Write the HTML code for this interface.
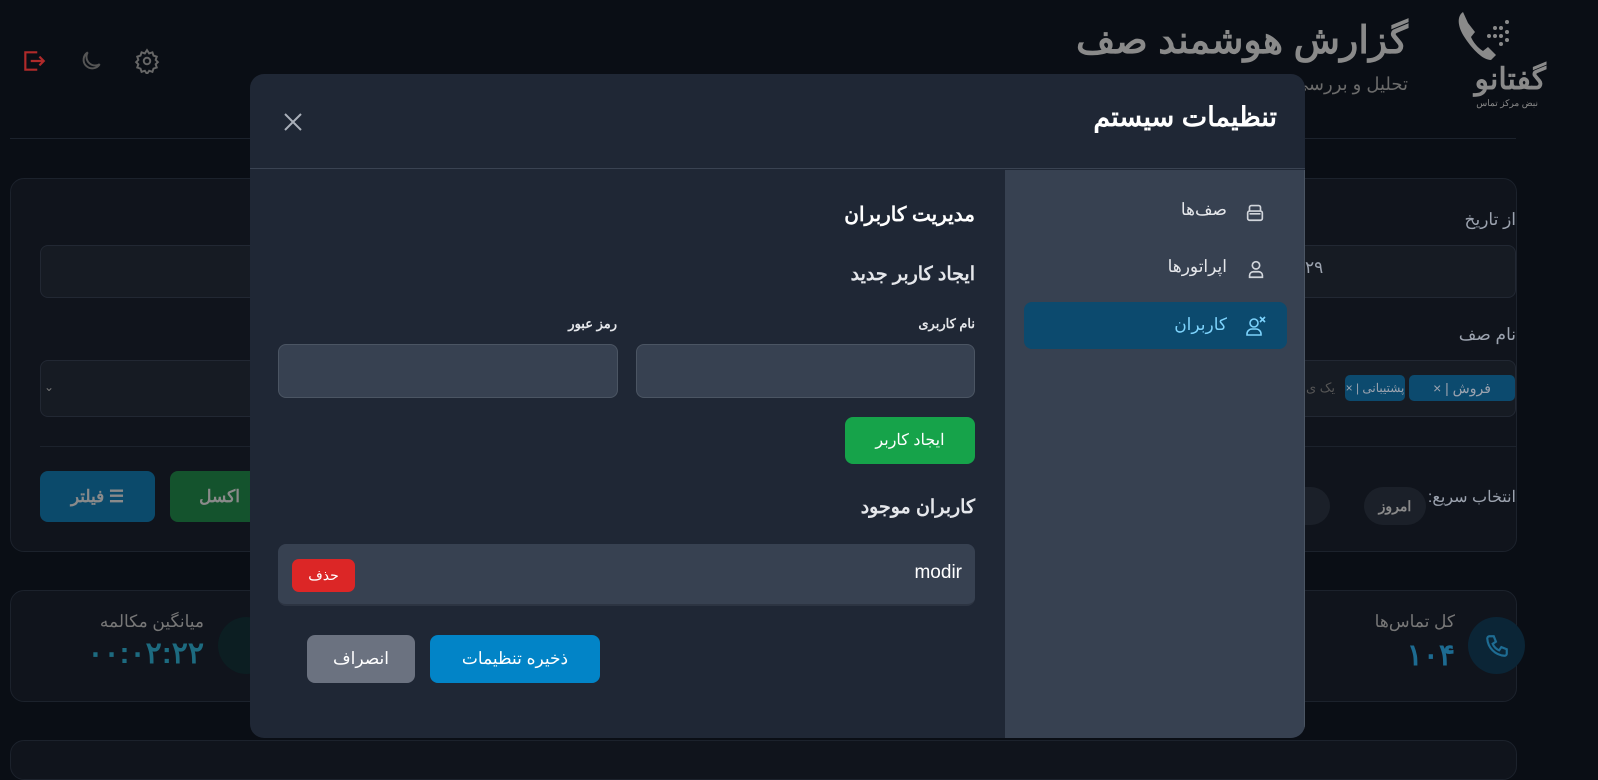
<!DOCTYPE html>
<html dir="rtl"><head><meta charset="utf-8"><style>
*{box-sizing:border-box;margin:0;padding:0}
body{width:1598px;height:756px;overflow:hidden;background:#0a0e15;font-family:"Liberation Sans","Noto Sans CJK SC",sans-serif;position:relative;color:#e5e7eb}
.a{position:absolute}
.card{position:absolute;background:#10141c;border:1px solid #1c222c;border-radius:14px}
.inp{position:absolute;background:#161b23;border:1px solid #222833;border-radius:8px}
.m{position:absolute;left:250px;top:74px;width:1055px;height:664px;background:#1f2735;border-radius:14px;overflow:hidden}
.t{position:absolute;white-space:nowrap}
.tag{position:absolute;height:26px;background:#0c4a6e;border-radius:5px;color:#9ca3af;font-size:14px;line-height:26px;text-align:center;white-space:nowrap;overflow:hidden}
</style></head><body>
<!-- background page -->
<div class="t" style="right:190px;top:18px;font-size:38px;font-weight:bold;color:#8a8a8a">گزارش هوشمند صف</div>
<div class="t" style="right:190px;top:74px;font-size:18px;color:#6b6b6b">تحلیل و بررسی</div>
<div class="t" style="right:52px;top:62px;font-size:30px;font-weight:bold;color:#8a8a8a">گفتانو</div>
<div class="t" style="right:60px;top:98px;font-size:9px;color:#8a8a8a">نبض مرکز تماس</div>
<svg class="a" style="left:1455px;top:8px" width="60" height="55" viewBox="0 0 60 55"><path d="M8 4c-6 4-6 14 2 26s18 22 26 22l5-5-8-8-5 4c-5-3-10-9-12-14l4-5-7-9z" fill="#8a8a8a"/><g fill="#8a8a8a"><circle cx="40" cy="20" r="2"/><circle cx="46" cy="20" r="2"/><circle cx="52" cy="24" r="2"/><circle cx="40" cy="28" r="2"/><circle cx="46" cy="28" r="2"/><circle cx="34" cy="28" r="2"/><circle cx="52" cy="32" r="2"/><circle cx="46" cy="36" r="2"/><circle cx="52" cy="14" r="2"/></g></svg>
<svg class="a" style="left:20px;top:48px" width="28" height="26" viewBox="0 0 24 24" fill="none" stroke="#b02a2a" stroke-width="2"><path d="M14 5V4H4v16h10v-1M9 12h12M17 8l4 4-4 4"/></svg>
<svg class="a" style="left:78px;top:48px" width="26" height="26" viewBox="0 0 24 24" fill="none" stroke="#555" stroke-width="1.8"><path d="M20 15A8 8 0 0 1 9 4a8 8 0 1 0 11 11z"/></svg>
<svg class="a" style="left:134px;top:48px" width="26" height="26" viewBox="0 0 24 24" fill="none" stroke="#666" stroke-width="1.8"><circle cx="12" cy="12" r="3"/><path d="M12 2l2 3 3-1 1 3 3 1-1 3 2 2-2 2 1 3-3 1-1 3-3-1-2 3-2-3-3 1-1-3-3-1 1-3-2-2 2-2-1-3 3-1 1-3 3 1z"/></svg>
<div class="a" style="left:10px;top:138px;width:1506px;height:1px;background:#1c222c"></div>
<div class="card" style="left:10px;top:178px;width:1507px;height:374px"></div>
<div class="t" style="right:82px;top:210px;font-size:17px;color:#9ca3af">از تاریخ</div>
<div class="inp" style="left:40px;top:245px;width:1476px;height:53px"></div>
<div class="t" style="left:1305px;top:258px;font-size:17px;color:#9ca3af">۲۹</div>
<div class="t" style="right:82px;top:325px;font-size:17px;color:#9ca3af">نام صف</div>
<div class="inp" style="left:40px;top:360px;width:1476px;height:57px"></div>
<div class="t" style="left:44px;top:380px;font-size:12px;color:#777">⌄</div>
<div class="tag" style="left:1409px;top:375px;width:106px">فروش | ×</div>
<div class="tag" style="left:1345px;top:375px;width:60px;font-size:12px">پشتیبانی | ×</div>
<div class="t" style="left:1306px;top:380px;font-size:13px;color:#555">یک ی</div>
<div class="a" style="left:40px;top:446px;width:1476px;height:1px;background:#1c222c"></div>
<div class="t" style="right:82px;top:487px;font-size:16px;color:#9ca3af">انتخاب سریع:</div>
<div class="a" style="left:1364px;top:487px;width:62px;height:38px;background:#1b2029;border-radius:19px;color:#8a8a8a;font-size:14px;font-weight:bold;text-align:center;line-height:38px">امروز</div>
<div class="a" style="left:1280px;top:487px;width:50px;height:38px;background:#1b2029;border-radius:19px"></div>
<div class="a" style="left:40px;top:471px;width:115px;height:51px;background:#0b4a6b;border-radius:8px;color:#8a8a8a;font-size:17px;font-weight:bold;text-align:center;line-height:51px">☰ فیلتر</div>
<div class="a" style="left:170px;top:471px;width:100px;height:51px;background:#14532d;border-radius:8px;color:#8a8a8a;font-size:17px;font-weight:bold;line-height:51px;padding-right:30px">اکسل</div>
<div class="card" style="left:10px;top:590px;width:1507px;height:112px"></div>
<div class="a" style="left:1468px;top:617px;width:57px;height:57px;border-radius:50%;background:#0b2536"></div>
<svg class="a" style="left:1484px;top:633px" width="26" height="26" viewBox="0 0 24 24" fill="none" stroke="#1e6c93" stroke-width="2"><path d="M5 3h4l2 5-3 2a11 11 0 0 0 6 6l2-3 5 2v4a2 2 0 0 1-2 2A17 17 0 0 1 3 5a2 2 0 0 1 2-2z"/></svg>
<div class="t" style="right:143px;top:612px;font-size:17px;color:#777">کل تماس‌ها</div>
<div class="t" style="right:143px;top:638px;font-size:30px;font-weight:bold;color:#1d6b91">۱۰۴</div>
<div class="a" style="left:218px;top:617px;width:57px;height:57px;border-radius:50%;background:#0c1e22"></div>
<div class="t" style="right:1394px;top:612px;font-size:17px;color:#777">میانگین مکالمه</div>
<div class="t" style="right:1394px;top:636px;font-size:30px;font-weight:bold;color:#1d6b80">۰۰:۰۲:۲۲</div>
<div class="card" style="left:10px;top:740px;width:1507px;height:40px"></div>

<!-- modal -->
<div class="m">
  <div class="a" style="left:0;top:0;width:1055px;height:95px;border-bottom:1px solid #3a4352"></div>
  <div class="t" style="right:28px;top:28px;font-size:27px;font-weight:bold;color:#fff">تنظیمات سیستم</div>
  <svg class="a" style="left:32px;top:37px" width="22" height="22" viewBox="0 0 22 22" stroke="#aab0ba" stroke-width="2"><path d="M3 3l16 16M19 3L3 19"/></svg>
  <div class="a" style="left:755px;top:96px;width:300px;height:568px;background:#374151;border-right:1px solid #4b5563"></div>
  <div class="t" style="right:78px;top:126px;font-size:17px;color:#e5e7eb">صف‌ها</div>
  <svg class="a" style="left:994px;top:127px" width="22" height="22" viewBox="0 0 24 24" fill="none" stroke="#d1d5db" stroke-width="1.8"><rect x="4" y="11" width="16" height="10" rx="2"/><path d="M6 11V7a2 2 0 0 1 2-2h8a2 2 0 0 1 2 2v4M6 14h12"/></svg>
  <div class="t" style="right:78px;top:183px;font-size:17px;color:#e5e7eb">اپراتورها</div>
  <svg class="a" style="left:995px;top:184px" width="22" height="22" viewBox="0 0 24 24" fill="none" stroke="#d1d5db" stroke-width="1.8"><circle cx="12" cy="8" r="4"/><path d="M5 21v-2a4 4 0 0 1 4-4h6a4 4 0 0 1 4 4v2z"/></svg>
  <div class="a" style="left:774px;top:228px;width:263px;height:47px;background:#0c4a6e;border-radius:8px"></div>
  <div class="t" style="right:78px;top:241px;font-size:17px;color:#7dd3fc">کاربران</div>
  <svg class="a" style="left:994px;top:240px" width="24" height="24" viewBox="0 0 24 24" fill="none" stroke="#7dd3fc" stroke-width="1.6"><circle cx="10" cy="9" r="4"/><path d="M3 21v-1a5 5 0 0 1 5-5h4a5 5 0 0 1 5 5v1zM16 3l5 5M21 3l-5 5"/></svg>
  <div class="t" style="right:330px;top:128px;font-size:20px;font-weight:bold;color:#fff">مدیریت کاربران</div>
  <div class="t" style="right:330px;top:189px;font-size:19px;font-weight:bold;color:#e5e7eb">ایجاد کاربر جدید</div>
  <div class="t" style="right:330px;top:242px;font-size:13px;font-weight:bold;color:#e5e7eb">نام کاربری</div>
  <div class="t" style="right:688px;top:242px;font-size:13px;font-weight:bold;color:#e5e7eb">رمز عبور</div>
  <div class="a" style="left:386px;top:270px;width:339px;height:54px;background:#374151;border:1px solid #4b5563;border-radius:8px"></div>
  <div class="a" style="left:28px;top:270px;width:340px;height:54px;background:#374151;border:1px solid #4b5563;border-radius:8px"></div>
  <div class="a" style="left:595px;top:343px;width:130px;height:47px;background:#16a34a;border-radius:8px;color:#fff;font-size:16px;text-align:center;line-height:47px">ایجاد کاربر</div>
  <div class="t" style="right:330px;top:422px;font-size:19px;font-weight:bold;color:#e5e7eb">کاربران موجود</div>
  <div class="a" style="left:28px;top:470px;width:697px;height:62px;background:#374151;border-radius:8px;border-bottom:2px solid #2c3442"></div>
  <div class="t" style="right:343px;top:488px;font-size:19px;color:#fff">modir</div>
  <div class="a" style="left:42px;top:485px;width:63px;height:33px;background:#dc2626;border-radius:7px;color:#fff;font-size:14px;text-align:center;line-height:33px">حذف</div>
  <div class="a" style="left:180px;top:561px;width:170px;height:48px;background:#0284c7;border-radius:8px;color:#fff;font-size:17px;text-align:center;line-height:48px">ذخیره تنظیمات</div>
  <div class="a" style="left:57px;top:561px;width:108px;height:48px;background:#6b7280;border-radius:8px;color:#fff;font-size:17px;text-align:center;line-height:48px">انصراف</div>
</div>
</body></html>
